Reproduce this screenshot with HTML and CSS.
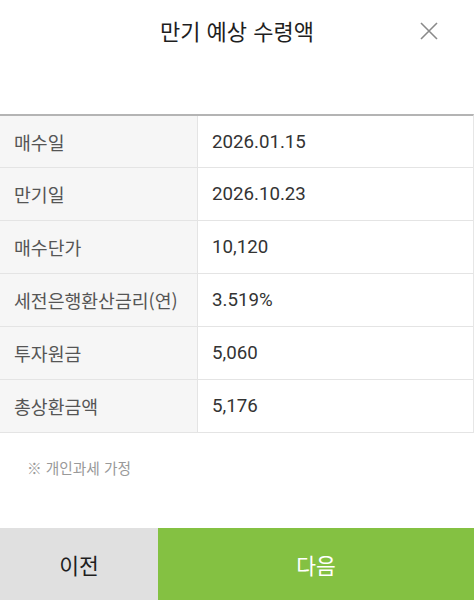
FILE: index.html
```html
<!DOCTYPE html>
<html lang="ko">
<head>
<meta charset="utf-8">
<link rel="stylesheet" href="styles.css">
</head>
<body>
<div class="sheet">
  <header class="head">
    <h1 class="title">만기 예상 수령액</h1>
    <button class="close" aria-label="닫기">
      <svg width="18" height="18" viewBox="0 0 18 18"><path d="M1 1L17 17M17 1L1 17" stroke="#8a8a8a" stroke-width="1.6" fill="none"/></svg>
    </button>
  </header>
  <div class="table">
    <div class="row"><div class="label">매수일</div><div class="value">2026.01.15</div></div>
    <div class="row"><div class="label">만기일</div><div class="value">2026.10.23</div></div>
    <div class="row"><div class="label">매수단가</div><div class="value">10,120</div></div>
    <div class="row"><div class="label">세전은행환산금리(연)</div><div class="value">3.519%</div></div>
    <div class="row"><div class="label">투자원금</div><div class="value">5,060</div></div>
    <div class="row"><div class="label">총상환금액</div><div class="value">5,176</div></div>
  </div>
  <p class="note">※ 개인과세 가정</p>
  <div class="actions">
    <button class="btn prev">이전</button>
    <button class="btn next">다음</button>
  </div>
</div>
</body>
</html>
```
FILE: styles.css
```css
* { box-sizing: border-box; }
html, body { margin: 0; padding: 0; }
body {
  font-family: "Noto Sans CJK KR", "Noto Sans", Roboto, sans-serif;
  background: #fff;
  width: 474px;
  height: 600px;
  overflow: hidden;
}
.sheet {
  display: flex;
  flex-direction: column;
  height: 600px;
}
.head {
  position: relative;
  height: 114px;
  display: flex;
  justify-content: center;
  align-items: flex-start;
}
.title {
  margin: 12px 0 0;
  font-size: 22px;
  font-weight: 400;
  color: #1e1e1e;
  line-height: 36px;
}
.close {
  position: absolute;
  right: 36px;
  top: 22px;
  width: 18px;
  height: 18px;
  padding: 0;
  border: 0;
  background: none;
  display: flex;
}
.table {
  border-top: 2px solid #b4b4b4;
  border-right: 1px solid #e6e6e6;
}
.row {
  display: grid;
  grid-template-columns: 198px 1fr;
  height: 53px;
  border-bottom: 1px solid #e4e4e4;
}
.row:first-child { height: 52px; }
.label {
  background: #f6f6f6;
  border-right: 1px solid #e4e4e4;
  display: flex;
  align-items: center;
  padding-left: 14px;
  font-size: 18.3px;
  color: #555;
}
.value {
  display: flex;
  align-items: center;
  padding-left: 14px;
  font-family: Roboto, "Noto Sans CJK KR", sans-serif;
  font-size: 18.7px;
  color: #333;
}
.note {
  margin: 24px 0 0 27px;
  font-size: 14.7px;
  color: #999;
  line-height: 22px;
}
.actions {
  margin-top: auto;
  display: flex;
  height: 72px;
}
.btn {
  border: 0;
  margin: 0;
  font-family: "Noto Sans CJK KR", sans-serif;
  font-size: 21.5px;
  padding: 0;
}
.prev {
  width: 158px;
  background: #e0e0e0;
  color: #1e1e1e;
}
.next {
  flex: 1;
  background: #84c142;
  color: #fff;
}
```
